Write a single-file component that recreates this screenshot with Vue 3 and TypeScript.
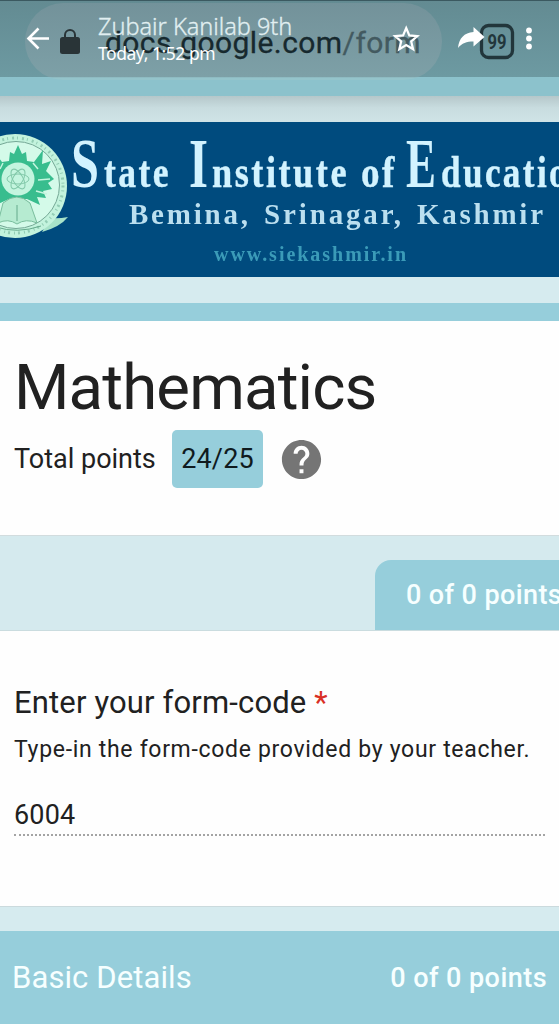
<script setup lang="ts">
interface Word { text: string; x: number; width: number; size: number }

const titleWords: Word[] = [
  { text: 'S', x: 71, width: 28, size: 69 },
  { text: 'tate', x: 104, width: 67, size: 44 },
  { text: 'I', x: 189, width: 19, size: 69 },
  { text: 'nstitute', x: 212, width: 137, size: 44 },
  { text: 'of', x: 361, width: 36, size: 44 },
  { text: 'E', x: 406, width: 30, size: 69 },
  { text: 'ducation', x: 441, width: 150, size: 44 },
]
const formCode: string = '6004'
</script>

<template>
  <main class="screen">
    <header class="browser">
      <div class="pill"></div>
      <div class="url"><span>docs.google.com</span><span class="path">/form</span></div>
      <svg class="chrome-icons" viewBox="0 0 559 77" aria-hidden="true">
        <path d="M65 39v-4a5 5 0 0 1 10 0v4" fill="none" stroke="#293437" stroke-width="2" />
        <rect x="60" y="37" width="20" height="17" rx="2.5" fill="#293437" />
        <rect x="481.500" y="25.500" width="31" height="32" rx="7" fill="none" stroke="#22363b" stroke-width="3.300" />
        <text class="tabs" x="487.500" y="48.500" textLength="19" lengthAdjust="spacingAndGlyphs">99</text>
      </svg>
      <div class="contact">
        <span class="name">Zubair Kanilab 9th</span>
        <span class="time">Today, 1:52 pm</span>
      </div>
      <svg class="chrome-icons" viewBox="0 0 559 77" aria-hidden="true">
        <path d="M49 38.500H29M38.500 28.500l-10 10 10 10" fill="none" stroke="#fff" stroke-width="2.600" />
        <path d="M406.200 28l3.100 7.400 8 .7-6.100 5.300 1.900 7.900-6.900-4.200-6.900 4.200 1.900-7.900-6.100-5.300 8-.7z" fill="none" stroke="#fff" stroke-width="2.200" />
        <path d="M458 48c1-10 6-15 15.500-16v-5l11 10-11 9.500v-5c-7 0-11.500 1.500-15.500 6.500z" fill="#fff" />
        <circle cx="529" cy="30.500" r="2.900" fill="#fff" />
        <circle cx="529" cy="38.500" r="2.900" fill="#fff" />
        <circle cx="529" cy="46.500" r="2.900" fill="#fff" />
      </svg>
    </header>
    <div class="header-strip"></div>
    <div class="shade"></div>

    <svg class="banner" viewBox="0 122 559 155">
      <rect y="122" width="559" height="155" fill="#004b7e" />
      <g class="seal">
        <path d="M50 218Q58 219 68 217Q60 227 42 232z" fill="#a8e3c9" />
        <circle cx="15" cy="186" r="52" fill="#c3f3dd" />
        <circle cx="16" cy="185" r="43.500" fill="#d4fae9" stroke="#75a896" stroke-width="1" />
        <circle cx="15.500" cy="185.500" r="47.500" fill="none" stroke="#93cdb5" stroke-width="3" stroke-dasharray="2 3 1 4" />
        <path d="M18 145L22 154L26 152L27 161L34 162L43 150L42 164L51 161L46 171L54 179L48 183L52 189L43 191L46 198L37 197L40 205L27 199L9 199L-4 205L-1 197L-10 198L-7 191L-16 189L-12 183L-18 179L-10 171L-15 161L-6 164L-7 150L2 162L9 161L10 152L14 154z" fill="#38bd8e" />
        <path d="M33 163l5 6M38 180l12-1M36 191l11 3M3 163l-3 6" stroke="#c5f5df" stroke-width="1.500" />
        <circle cx="18" cy="179" r="16.500" fill="#c4f5df" />
        <g fill="none" stroke="#83c9aa" stroke-width="1">
          <ellipse cx="18" cy="179" rx="11" ry="5" />
          <ellipse cx="18" cy="179" rx="11" ry="5" transform="rotate(60 18 179)" />
          <ellipse cx="18" cy="179" rx="11" ry="5" transform="rotate(120 18 179)" />
        </g>
        <path d="M-2 223l5-20q14-12 27 0l7 20q-11-5-20 1-9-6-19-1z" fill="#b6ebd1" stroke="#79bd9d" />
        <path d="M17 205v16M-4 227q21 7 45-1" fill="none" stroke="#65aa8c" />
      </g>
      <g class="institute">
        <text v-for="word in titleWords" :key="word.text" :class="{ spaced: word.text.length > 1 }" :x="word.x" y="187" :font-size="word.size" :textLength="word.width" lengthAdjust="spacingAndGlyphs">{{ word.text }}</text>
      </g>
      <g class="place">
        <text x="129" y="223.500" textLength="119">Bemina,</text>
        <text x="264" y="223.500" textLength="137">Srinagar,</text>
        <text x="417" y="223.500" textLength="126">Kashmir</text>
      </g>
      <text class="website" x="214" y="260.500" textLength="192">www.siekashmir.in</text>
    </svg>

    <div class="gap"></div>
    <div class="accent"></div>
    <section class="summary">
      <h1>Mathematics</h1>
      <div class="score-row">
        <span class="total">Total points</span>
        <span class="score">24/25</span>
        <svg class="help" viewBox="0 0 24 24" aria-label="Help">
          <path fill="#757575" d="M12 2C6.480 2 2 6.480 2 12s4.480 10 10 10 10-4.480 10-10S17.520 2 12 2zm1 17h-2v-2h2v2zm2.070-7.750l-.9.920C13.450 12.900 13 13.500 13 15h-2v-.5c0-1.100.45-2.100 1.170-2.830l1.240-1.260c.37-.36.59-.86.59-1.410 0-1.100-.9-2-2-2s-2 .9-2 2H8c0-2.210 1.790-4 4-4s4 1.790 4 4c0 .88-.36 1.680-.93 2.250z" />
        </svg>
      </div>
    </section>

    <div class="points-band"><div class="points-tab">0 of 0 points</div></div>
    <section class="question">
      <h2>Enter your form-code <span>*</span></h2>
      <p class="hint">Type-in the form-code provided by your teacher.</p>
      <p class="answer">{{ formCode }}</p>
    </section>
    <div class="section-gap"></div>
    <footer><span class="details">Basic Details</span><span class="points">0 of 0 points</span></footer>
  </main>
</template>

<style>
body { margin: 0; background: #fefefe; }
</style>

<style scoped>
.screen { width: 559px; height: 1024px; overflow: hidden; display: flex; flex-direction: column; font-family: Roboto, sans-serif; color: #212121; background: #fefefe; }
.screen > * { flex: none; box-sizing: border-box; }
.browser { height: 77px; position: relative; background: linear-gradient(#638b92, #6d9aa2); border-top: 1px solid #3b5960; }
.pill { position: absolute; left: 25px; top: 2px; width: 417px; height: 77px; border-radius: 39px; background: linear-gradient(#73929a, #7da0a7 96%, #94c4cb 97%); }
.chrome-icons { position: absolute; left: 0; top: -1px; width: 559px; height: 77px; }
.url { position: absolute; left: 105px; top: 24px; font-size: 30px; line-height: 36px; letter-spacing: .42px; color: #17292e; -webkit-text-stroke: .3px currentColor; white-space: nowrap; }
.path { color: #435a60; }
.tabs { font: 700 20px Roboto, sans-serif; fill: #22363b; }
.contact { position: absolute; left: 98px; top: 11px; display: flex; flex-direction: column; font-family: "Noto Sans", sans-serif; white-space: nowrap; }
.name { font-size: 23.500px; line-height: 28px; letter-spacing: -.02px; color: #e1eff1; font-weight: 300; -webkit-text-stroke: .3px currentColor; }
.time { font-size: 17.500px; line-height: 27px; letter-spacing: -.45px; color: #fff; }
.header-strip { height: 19px; background: #8cc2cc; }
.shade { height: 26px; background: linear-gradient(#b5c7ca, #c8dcdf 45%, #cfe3e6); }
.banner { width: 559px; height: 155px; display: block; }
.seal { filter: blur(.6px); }
.institute { font-family: "Liberation Serif", serif; font-weight: 700; fill: #d2f3ff; filter: blur(.4px); }
.spaced { letter-spacing: 3px; stroke: #d2f3ff; stroke-width: .4px; }
.place { font-family: "Liberation Serif", serif; font-weight: 700; font-size: 29px; fill: #bbdfef; filter: blur(.4px); }
.website { font-family: "Liberation Serif", serif; font-weight: 700; font-size: 20px; fill: #3b9bb8; filter: blur(.5px); }
.gap { height: 26px; background: #d6ebef; }
.accent { height: 18px; background: #96cedb; }
.summary { height: 215px; padding: 31px 14px 0; border-bottom: 1px solid #d2dcde; }
h1 { margin: 0; font-size: 63.500px; line-height: 72px; font-weight: 400; letter-spacing: -.85px; }
.score-row { display: flex; align-items: center; height: 58px; margin-top: 6px; }
.total { width: 158px; font-size: 27px; letter-spacing: 0; white-space: nowrap; }
.score { width: 91px; height: 58px; border-radius: 5px; background: #96cedb; color: #101b1e; text-align: center; font-size: 27px; line-height: 59px; letter-spacing: .15px; }
.help { width: 47px; height: 47px; margin-left: 15px; }
.points-band { height: 95px; background: #d5eaee; display: flex; justify-content: flex-end; align-items: flex-end; border-bottom: 1px solid #cadcdf; overflow: hidden; }
.points-tab { box-sizing: border-box; width: 184px; height: 70px; border-radius: 16px 0 0; padding-left: 31px; background: #96cedb; color: #f6ffff; font-size: 27px; line-height: 70px; font-weight: 500; letter-spacing: .4px; white-space: nowrap; }
.question { height: 275px; padding: 53px 14px 0; }
h2 { margin: 0; font-size: 31px; line-height: 38px; font-weight: 400; letter-spacing: .15px; }
h2 span { color: #d93025; }
.hint { margin: 13px 0 0; font-size: 23px; line-height: 30px; letter-spacing: .69px; white-space: nowrap; }
.answer { margin: 33px 0 0; height: 36px; font-size: 27px; line-height: 34px; letter-spacing: .2px; border-bottom: 2px dotted #a4a4a4; }
.section-gap { height: 25px; background: #d6ebef; border-top: 1px solid #cbdadd; }
footer { height: 93px; padding: 0 12px; display: flex; align-items: center; justify-content: space-between; background: #96cedb; color: #f6ffff; }
.details { font-size: 31px; letter-spacing: .1px; }
.points { font-size: 27px; font-weight: 500; letter-spacing: .45px; }
</style>
